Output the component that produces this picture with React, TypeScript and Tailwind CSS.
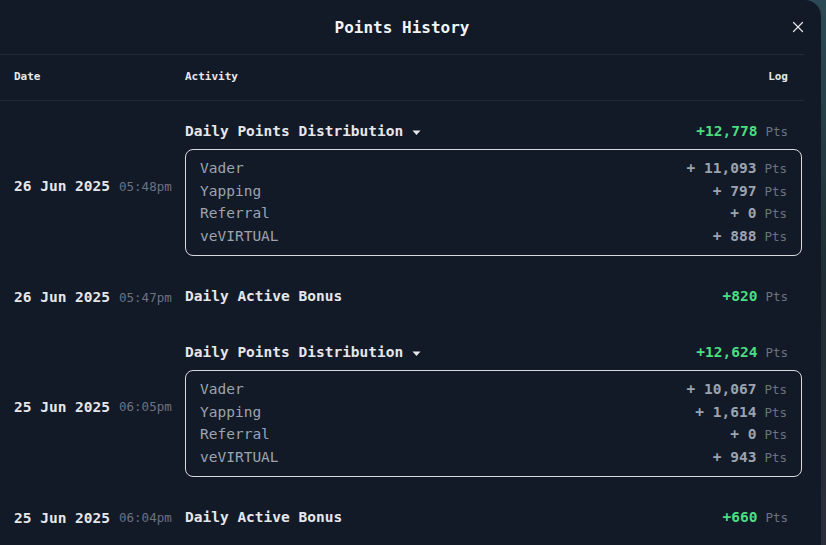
import { X } from "lucide-react";

type Part = { name: string; pts: string };

type Entry = {
	date: string;
	time: string;
	title: string;
	total: string;
	parts?: Part[];
};

const entries: Entry[] = [
	{
		date: "26 Jun 2025",
		time: "05:48pm",
		title: "Daily Points Distribution",
		total: "+12,778",
		parts: [
			{ name: "Vader", pts: "+ 11,093" },
			{ name: "Yapping", pts: "+ 797" },
			{ name: "Referral", pts: "+ 0" },
			{ name: "veVIRTUAL", pts: "+ 888" },
		],
	},
	{ date: "26 Jun 2025", time: "05:47pm", title: "Daily Active Bonus", total: "+820" },
	{
		date: "25 Jun 2025",
		time: "06:05pm",
		title: "Daily Points Distribution",
		total: "+12,624",
		parts: [
			{ name: "Vader", pts: "+ 10,067" },
			{ name: "Yapping", pts: "+ 1,614" },
			{ name: "Referral", pts: "+ 0" },
			{ name: "veVIRTUAL", pts: "+ 943" },
		],
	},
	{ date: "25 Jun 2025", time: "06:04pm", title: "Daily Active Bonus", total: "+660" },
];

const Caret = () => (
	<svg width="9" height="6" viewBox="0 0 9 6" className="ml-[9px] mt-[2px]">
		<path d="M0.5 0.5 L8.5 0.5 L4.5 5 Z" fill="#e5e7eb" />
	</svg>
);

const Pts = () => <span className="ml-[8px] text-[12.5px] text-[#6b7280]">Pts</span>;

const Row = ({ entry }: { entry: Entry }) => (
	<div className={`flex pl-[14px] pr-[2px] pt-[17px] ${entry.parts ? "pb-[14px]" : "pb-[13px]"}`}>
		<div className="flex w-[171px] shrink-0 items-center">
			<span className="text-[14.5px] font-bold text-[#e5e7eb]">{entry.date}</span>
			<span className="ml-[9px] text-[12.5px] text-[#6b7280]">{entry.time}</span>
		</div>
		<div className="flex-1">
			<div className={entry.parts ? "pt-[4px]" : ""}>
				<div className="flex h-[20px] items-center justify-between pr-[14px]">
					<div className="flex items-center text-[14.5px] font-bold text-[#e5e7eb]">
						{entry.title}
						{entry.parts && <Caret />}
					</div>
					<div className="flex items-baseline">
						<span className="text-[14.5px] font-bold text-[#4ade80]">{entry.total}</span>
						<Pts />
					</div>
				</div>
			</div>
			{entry.parts && (
				<div className="mt-[7px] rounded-lg border border-[#d7dbe0] px-[14px] pt-[8px] pb-[7px]">
					{entry.parts.map((p) => (
						<div key={p.name} className="flex h-[22.5px] items-center justify-between">
							<span className="text-[14.5px] text-[#9ca3af]">{p.name}</span>
							<div className="flex items-baseline">
								<span className="text-[14.5px] font-bold text-[#9ca3af]">{p.pts}</span>
								<Pts />
							</div>
						</div>
					))}
				</div>
			)}
		</div>
	</div>
);

export default function App() {
	return (
		<div className="h-[545px] w-[826px] overflow-hidden bg-gradient-to-b from-[#2c4a55] via-[#1e2e33] to-[#2a2d3a] font-['DejaVu_Sans_Mono',monospace]">
			<div className="h-[545px] w-[821px] overflow-hidden rounded-tr-2xl bg-[#121a28]">
				<div className="w-[804px]">
					<div className="relative flex h-[55px] items-center justify-center border-b border-[#1f2937] pt-[2px]">
						<h2 className="text-[16px] font-bold text-[#f3f4f6]">Points History</h2>
						<button className="absolute right-[-3px] top-[18px] text-[#e5e7eb]">
							<X size={18} strokeWidth={1.6} />
						</button>
					</div>
					<div className="flex h-[46px] items-center border-b border-[#1f2937] pl-[14px] pr-[16px] text-[11px] font-bold text-[#e5e7eb]">
						<span className="w-[171px]">Date</span>
						<span className="flex-1">Activity</span>
						<span>Log</span>
					</div>
					{entries.map((e, i) => (
						<Row key={i} entry={e} />
					))}
				</div>
			</div>
		</div>
	);
}
